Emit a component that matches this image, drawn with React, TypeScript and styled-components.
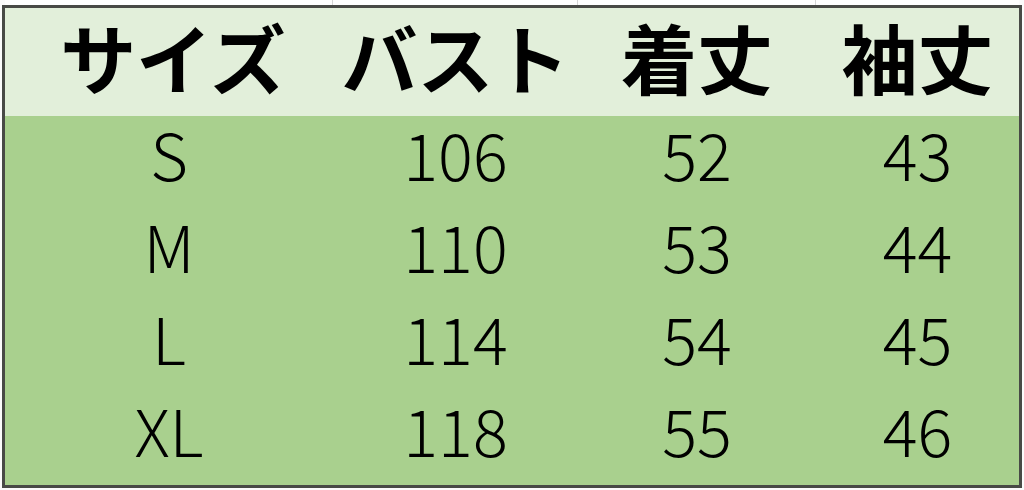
import styled, { createGlobalStyle } from 'styled-components'

type SizeRow = {
  size: string
  bust: number
  length: number
  sleeve: number
}

const HEADERS = ['サイズ', 'バスト', '着丈', '袖丈']

const ROWS: SizeRow[] = [
  { size: 'S', bust: 106, length: 52, sleeve: 43 },
  { size: 'M', bust: 110, length: 53, sleeve: 44 },
  { size: 'L', bust: 114, length: 54, sleeve: 45 },
  { size: 'XL', bust: 118, length: 55, sleeve: 46 },
]

const COLUMNS = '328px 245px 238px 203px'

export default function App() {
  return (
    <>
      <GlobalStyle />
      <Sheet>
        <GridStrip>
          <GridCell />
          <GridCell />
          <GridCell />
          <GridCell $last />
        </GridStrip>
        <Table>
          <HeaderRow>
            {HEADERS.map((label, i) => (
              <HeaderCell key={label} $first={i === 0}>
                {label}
              </HeaderCell>
            ))}
          </HeaderRow>
          <Body>
            {ROWS.map((row) => (
              <BodyRow key={row.size}>
                <Cell>{row.size}</Cell>
                <Cell>{row.bust}</Cell>
                <Cell>{row.length}</Cell>
                <Cell>{row.sleeve}</Cell>
              </BodyRow>
            ))}
          </Body>
        </Table>
      </Sheet>
    </>
  )
}

const GlobalStyle = createGlobalStyle`
  html, body {
    margin: 0;
    padding: 0;
    background: #ffffff;
  }
  body {
    font-family: "Noto Sans CJK JP", "Noto Sans", sans-serif;
  }
`

const Sheet = styled.div`
  width: 1024px;
  height: 490px;
  padding-left: 2px;
  box-sizing: border-box;
  overflow: hidden;
  background: #fbfbfb;
`

const GridStrip = styled.div`
  display: grid;
  grid-template-columns: ${COLUMNS};
  height: 5px;
  padding-left: 3px;
`

const GridCell = styled.div<{ $last?: boolean }>`
  border-right: ${({ $last }) => ($last ? 'none' : '1px solid #d6d6d6')};
  background: #ffffff;
`

const Table = styled.div`
  width: 1020px;
  border: 3px solid #484a46;
  box-sizing: border-box;
`

const HeaderRow = styled.div`
  display: grid;
  grid-template-columns: ${COLUMNS};
  height: 108px;
  background: #e2efda;
`

const HeaderCell = styled.div<{ $first?: boolean }>`
  display: flex;
  align-items: center;
  justify-content: center;
  font-size: 76px;
  font-weight: 700;
  color: #000000;
  line-height: 1;
  padding-bottom: 12px;
  padding-left: ${({ $first }) => ($first ? '8px' : '0')};
`

const Body = styled.div`
  display: grid;
  grid-template-rows: repeat(4, 92.25px);
  background: #a9d08e;
`

const BodyRow = styled.div`
  display: grid;
  grid-template-columns: ${COLUMNS};
`

const Cell = styled.div`
  display: flex;
  align-items: center;
  justify-content: center;
  font-size: 65px;
  font-weight: 300;
  color: #000000;
  line-height: 1;
  padding-bottom: 18px;
`
